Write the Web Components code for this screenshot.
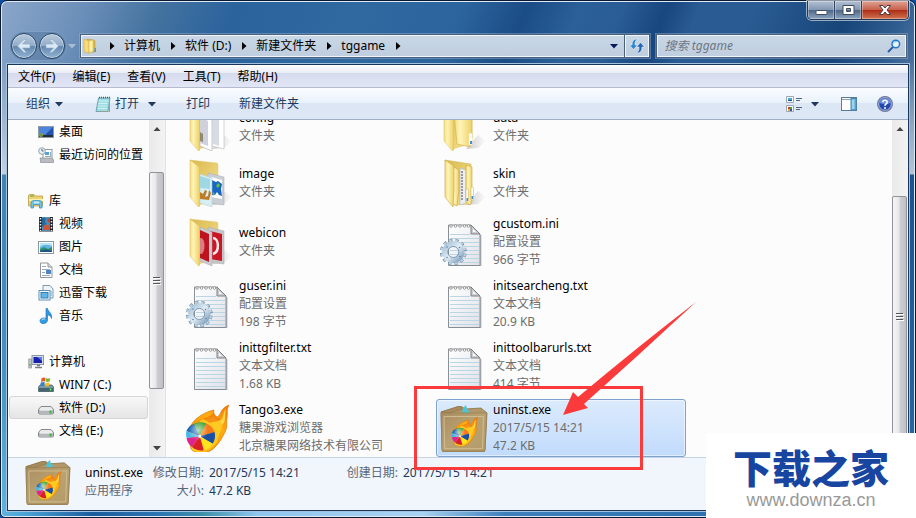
<!DOCTYPE html>
<html lang="zh-CN">
<head>
<meta charset="utf-8">
<title>tggame</title>
<style>
html, body { margin: 0; height: 100%; }
body { position: relative; overflow: hidden; background: #0b4fa8; font: 12px/18px "Noto Sans", "Noto Sans CJK SC", sans-serif; color: #000; }
</style>
</head>
<body>
<explorer-window></explorer-window>
<callout-mark></callout-mark>
<site-mark></site-mark>

<script>
const define = (name, html, setup) => customElements.define(name, class extends HTMLElement {
  connectedCallback() {
    if (this.shadowRoot) return;
    const t = document.createElement('template');
    t.innerHTML = typeof html === 'function' ? html(this) : html;
    this.attachShadow({ mode: 'open' }).append(t.content.cloneNode(true));
    if (setup) setup(this);
  }
});

const RESET = `button{font:inherit;color:inherit;background:none;border:0;margin:0;padding:0;display:flex;align-items:center;white-space:nowrap}`;

/* ---------- icon drawings ---------- */
const folderDefs = `<defs><linearGradient id="f" x1="0" x2="1"><stop offset="0" stop-color="#f4dc7c"/><stop offset=".35" stop-color="#fff5b8"/><stop offset="1" stop-color="#edcf66"/></linearGradient>
<linearGradient id="b" x1="0" x2="1" y2="1"><stop offset="0" stop-color="#d9b84e"/><stop offset="1" stop-color="#f7e390"/></linearGradient>
<linearGradient id="s" x1="0" x2="1"><stop offset="0" stop-color="#888" stop-opacity=".45"/><stop offset="1" stop-color="#999" stop-opacity="0"/></linearGradient></defs>`;
const shadow = `<path d="M26 46L38 32 46 38 38 45z" fill="url(#s)"/>`;
const folderBack = `<path d="M4 1L31 4Q32 4 32 6V40L13 46z" fill="url(#b)" stroke="#e0c468" stroke-width=".4"/>`;
const folderFront = `<path d="M4 1L12 7Q13.500 8 13.500 10V47.500Q13 49 12 47.500L4 38z" fill="url(#f)" stroke="#dcbf62" stroke-width=".5"/>`;
const folder = inner => folderDefs + shadow + folderBack + inner + folderFront;
const paper = `<defs><linearGradient id="p" x1="0" y1="0" x2="1" y2="1"><stop offset="0" stop-color="#fff"/><stop offset="1" stop-color="#dfe1e8"/></linearGradient></defs>
<path d="M8.500 7H31L40 16V47.500H8.500z" fill="url(#p)" stroke="#8b8f96"/><path d="M9 48.300H40.800V17" fill="none" stroke="#777d86" stroke-width=".7"/>
<path d="M31 7V16H40z" fill="#c9ccd2" stroke="#777" stroke-width=".9"/><path d="M33 11v3h3z" fill="#fff"/>
<path d="M10 16.500H30M10 20.500H39M10 24.500H39M10 28.500H39M10 32.500H39M10 36.500H39M10 40.500H39M10 44.500H39" stroke="#bcd5e4"/>
<g fill="#fff" stroke="#888" stroke-width=".8"><circle cx="11" cy="8" r="1.300"/><circle cx="15.500" cy="8" r="1.300"/><circle cx="20" cy="8" r="1.300"/><circle cx="24.500" cy="8" r="1.300"/><circle cx="28.500" cy="8" r="1.300"/></g>`;
const gear = `<defs><linearGradient id="g" x1="0" y1="0" x2="1" y2="1"><stop offset="0" stop-color="#a9c3d8"/><stop offset=".5" stop-color="#e0ecf4"/><stop offset="1" stop-color="#7fa0bc"/></linearGradient></defs>
<g transform="rotate(8 13.300 34)"><circle cx="13.300" cy="34" r="11.500" fill="none" stroke="#7390aa" stroke-width="3.800" stroke-dasharray="3.200 2.820"/><circle cx="13.300" cy="34" r="11.600" fill="none" stroke="#bdd2e2" stroke-width="2.600" stroke-dasharray="2.400 3.620" stroke-dashoffset="-.4"/></g>
<circle cx="13.300" cy="34" r="8.300" fill="none" stroke="url(#g)" stroke-width="5.600"/><circle cx="13.300" cy="34" r="5.500" fill="none" stroke="#6f90ab" stroke-width=".9"/>
<g fill="#5d86a8"><circle cx="7" cy="29" r=".8"/><circle cx="19.500" cy="29.500" r=".8"/><circle cx="20" cy="38.500" r=".8"/><circle cx="7" cy="39.500" r=".8"/></g>`;
const flameBall = `<defs><linearGradient id="fl" x1="1" y1="0" x2="0" y2="1"><stop offset="0" stop-color="#f0720c"/><stop offset=".35" stop-color="#ffae10"/><stop offset=".6" stop-color="#f79b0a"/><stop offset="1" stop-color="#ffe92e"/></linearGradient>
<radialGradient id="gl" cx=".45" cy=".25" r=".7"><stop offset="0" stop-color="#fff" stop-opacity=".65"/><stop offset=".5" stop-color="#fff" stop-opacity="0"/></radialGradient></defs>
<path d="M2 28C5 17 15 9 28 6C27 9 28 11 31 13C36 11 33 5 43 1C40 6 42 9 41 14C40 20 42 22 39 28C36 34 34 38 29 43C24 50 10 51 5 45z" fill="url(#fl)" stroke="#db7908" stroke-width=".7"/>
<path d="M14 17C21 14 24 16 28 12C29 17 36 15 36 21C36 27 33 28 32 36C29 44 20 48 12 46z" fill="#ffd427" opacity=".75"/><path d="M34 17C39 13 36 9 40 5C38 12 41 16 36 21z" fill="#ffd84a"/><path d="M17 15C23 12 26 12 28 7C28 14 33 15 34 13C35 19 27 17 24 19z" fill="#ee6b10" opacity=".6"/>
<g transform="rotate(-12 15 33)"><path d="M14 32L2 24A14.500 14.500 0 0 1 11 18.600z" fill="#1767b5"/><path d="M14 32L11 18.600A14.500 14.500 0 0 1 23 21z" fill="#3aa135"/><path d="M14 32L23 21A14.500 14.500 0 0 1 29.300 31z" fill="#f6791a"/><path d="M14 32L29.300 31A14.500 14.500 0 0 1 25 42z" fill="#1b4fa3"/><path d="M14 32L25 42A14.500 14.500 0 0 1 15 46.500z" fill="#ffe321"/><path d="M14 32L15 46.500A14.500 14.500 0 0 1 4 41z" fill="#da2027"/><path d="M14 32L4 41A14.500 14.500 0 0 1 .7 31z" fill="#df2490"/><path d="M14 32L.7 31A14.500 14.500 0 0 1 2 24z" fill="#45b6e6"/>
<circle cx="15" cy="33" r="14.300" fill="url(#gl)"/><circle cx="14" cy="32" r="1.500" fill="#fff"/></g>`;

const ICONS = {
  'folder-config': ['0 0 48 48', folder(`<path d="M26 11L38 15V46L26 43z" fill="#fff" stroke="#bbb" stroke-width=".6"/><path d="M27 14L33 16V43L27 41z" fill="#d7dbe6"/><path d="M14 12L26 17V48L14 43z" fill="#fff" stroke="#aaa" stroke-width=".6"/><path d="M14 14L22 18V43L14 40z" fill="#cfd2dc"/><path d="M14 29l3 2v8l-3-1z" fill="#8f8b72"/>`)],
  'folder-image': ['0 0 48 48', folder(`<path d="M22 14L38 18V46L22 44z" fill="#c9ced4" stroke="#aaa" stroke-width=".5"/><path d="M25 18L36 21V40L25 38z" fill="#fff"/><path d="M26 21l4 2 2-1 4 3-1 5 1 7-3-1-2-3-2 3-3 0z" fill="#1768c2"/><path d="M32 24l2 2-2 3-2-2zM27 33l2 2-2 2z" fill="#64c238"/><path d="M14 15L26 19V48L14 44z" fill="#d6eff3" stroke="#b5c7cc" stroke-width=".5"/><path d="M14 17L24 20V30L14 29z" fill="#9fd8e5"/><path d="M14 33l3 2 2-4 2 1-2 6 3-1 1-6 2 3-2 7-9-1z" fill="#bd7c26"/>`)],
  'folder-web': ['0 0 48 48', folder(`<path d="M22 9L38 13V46L22 44z" fill="#c5c7ca" stroke="#aaa" stroke-width=".5"/><path d="M24 13L36 16V43L24 41z" fill="#cb1625"/><path d="M27 20C33 20 34 34 27 36" fill="none" stroke="#ffe9e9" stroke-width="2.500"/><path d="M14 9L26 14V48L14 43z" fill="#c9cbce" stroke="#aaa" stroke-width=".5"/><path d="M14 12L23 16V44L14 40z" fill="#bd1420"/><ellipse cx="15" cy="28" rx="3.500" ry="8" fill="#fff" opacity=".45"/>`)],
  'folder-data': ['0 0 48 48', folder(`<path d="M14 9L29 11Q32 11 32 15V35L30 44 17 41z" fill="url(#f)" stroke="#d3b04b" stroke-width=".6"/><rect x="29" y="30" width="3" height="12" rx="1.500" fill="#fff"/><rect x="30" y="38" width="2" height="3" fill="#3d8fd8"/>`)],
  'folder-skin': ['0 0 48 48', folderDefs + shadow + `<path d="M5 1L31 5V45L14 46z" fill="url(#b)" stroke="#d5b350" stroke-width=".5"/><path d="M20 9L26 11V44L20 46z" fill="#eceef3" stroke="#aaa" stroke-width=".5"/><path d="M22 12v30" stroke="#999" stroke-width="2" stroke-dasharray="2 1"/><path d="M26 6L32 8V42L30 46 26 43z" fill="url(#f)" stroke="#c9a642" stroke-width=".6"/><path d="M12 7L19 11V30L17 47 12 44z" fill="url(#f)" stroke="#c9a642" stroke-width=".6"/><path d="M5 1L14 7V31L13 48 5 38z" fill="url(#f)" stroke="#c9a642" stroke-width=".6"/><rect x="26" y="30" width="2.500" height="13" rx="1.200" fill="#fff" stroke="#caa843" stroke-width=".5"/><rect x="31" y="28" width="2.500" height="13" rx="1.200" fill="#fff" stroke="#caa843" stroke-width=".5"/><path d="M27.300 39v3M32.300 37v3" stroke="#3d8fd8" stroke-width="1.500"/>`],
  'txt': ['0 0 48 48', paper],
  'ini': ['0 0 48 48', paper + gear],
  'tango': ['0 0 48 48', flameBall],
  'package': ['0 0 48 48', `<defs><linearGradient id="bx" x1="0" y1="0" x2="1" y2="1"><stop offset="0" stop-color="#a98d60"/><stop offset=".5" stop-color="#b9a272"/><stop offset="1" stop-color="#b39a68"/></linearGradient></defs>
  <path d="M1 8L17 3Q22 1 25 5L41 4 47 9 45 46Q45 48 43 48H4Q2 48 2 46z" fill="#b29868" stroke="#8e744a" stroke-width=".8"/><path d="M1 8L18 2.500Q21 2 23 5L9 9z" fill="#a78b5c" stroke="#8e744a" stroke-width=".6"/><path d="M23 4l3-3 1 4 3 3-4 1-4-1z" fill="#4cc5d6"/>
  <path d="M1 9H46.500L45 46Q45 47 43 47H4Q2 47 2 45z" fill="url(#bx)" stroke="#927a50" stroke-width=".6"/><path d="M4 12.500H43.500L42.500 44.700H4.700z" fill="none" stroke="#d3c093" stroke-width=".9"/><g transform="translate(11.500 12.500) scale(.61)">${flameBall}</g>`],
  'folder-mini': ['0 0 16 16', `<path d="M4 1L11 2Q12 2 12 4V14H4z" fill="#dfbb50" stroke="#b7933b" stroke-width=".5"/><path d="M1 1L6 3V15.500L1 13.500z" fill="#f6dc78" stroke="#c7a44a" stroke-width=".5"/><path d="M6 3L10 2V13L8 14.500 6 14z" fill="#fff0a2" stroke="#c7a44a" stroke-width=".4"/><path d="M11.500 10h1.500v4h-1.500z" fill="#4a9adb"/>`],
  'desktop': ['0 0 16 16', `<rect x=".5" y="2.500" width="15" height="11" fill="#2252ad" stroke="#8f99a8"/><path d="M1 3H15L6 12 1 12z" fill="#4b85dc"/><path d="M1 11H15V13H1z" fill="#22303e"/><circle cx="3" cy="11" r="2" fill="#e59a24"/><path d="M3 9v4M1 11h4" stroke="#2f9f54"/>`],
  'recent': ['0 0 16 16', `<rect x="5" y="2.500" width="9" height="10" fill="#fff" stroke="#8b99a6"/><rect x="7" y="5" width="4" height="3" fill="#4fa5d8"/><path d="M7 9.500h5M12.500 5v5" stroke="#96a9b8"/><circle cx="4" cy="4" r="3.300" fill="#e8eef2" stroke="#9aa6ad"/><path d="M4 2v2h1.500" fill="none" stroke="#4a6b85"/><path d="M2 11h12l1.500 2v2.500H2.500V13z" fill="#b9bdc2" stroke="#8b8f94" stroke-width=".7"/>`],
  'library': ['0 0 16 16', `<path d="M.5 4V2.500L1.500 1.500H6L7 3H14.500V13H.500z" fill="#eed372" stroke="#bd9c42" stroke-width=".8"/><path d="M2 3h4" stroke="#56a944"/><path d="M1 6H15V8H1z" fill="#fff2ae"/><path d="M3 15V10Q3 7.500 6 7.500H11Q14 7.500 14 10V15H11.500V11.500H5.500V15z" fill="#6dc6e8" stroke="#3f92bf" stroke-width=".8"/><path d="M6 8.500h5v2h-5z" fill="#c4edf8"/>`],
  'video': ['0 0 16 16', `<rect x="1" y="1" width="14" height="14.500" fill="#20262c"/><rect x="4" y="1" width="8" height="14" fill="#4d8fb8"/><path d="M4 2h4l-1 4 2 2-5 3z" fill="#23689c"/><path d="M5 10l3-2 1 2 3-2v6H5z" fill="#c9563b"/><path d="M9 3l3-1v4l-2 1z" fill="#b54a3d"/><path d="M2.500 2v13M13.500 2v13" stroke="#eee" stroke-width="1.500" stroke-dasharray="1.500 1.500"/>`],
  'picture': ['0 0 16 16', `<rect x=".5" y="2.500" width="15" height="12" fill="#fff" stroke="#8e989f"/><rect x="2" y="4" width="12" height="9" fill="#63b4e2"/><path d="M2 8Q6 4 14 7V4H2z" fill="#b8e6f6"/><path d="M2 10L6 8 10 10 14 8V13H2z" fill="#2f8c6c"/><path d="M2 12Q8 9 14 12V13H2z" fill="#1b5584"/>`],
  'document': ['0 0 16 16', `<path d="M2.500 1H10L14 5V15.500H2.500z" fill="#fff" stroke="#8f979e"/><path d="M10 1V5H14" fill="#d9dee3" stroke="#8f979e"/><path d="M4 4.500h4M4 7.500h8M4 10.500h3M4 13.500h8" stroke="#9aa7c0"/><rect x="8" y="8" width="5" height="4" fill="#4d85c4"/>`],
  'thunder': ['0 0 16 16', `<path d="M5 .500H12L15 4V13H5z" fill="#eef6fb" stroke="#8097ab"/><rect x="1" y="5.500" width="11" height="9.500" fill="#fff" stroke="#5e8fb4"/><rect x="3" y="7.500" width="7" height="5.500" fill="#60b5e7" stroke="#2e7fb8"/><path d="M13 6v5" stroke="#6ab0dc"/>`],
  'music': ['0 0 16 16', `<path d="M8 .500H9.500C10 4 14.500 4.500 13.500 10.500 13 8 11 7 9.500 7V12.500C9 16.500 2 16.800 2 12.800 2 10 6 9.300 8 10.500z" fill="#2f9be4" stroke="#1769ae" stroke-width=".6"/><path d="M3.500 12Q4.500 10.500 7 11" stroke="#b9e6fd" fill="none"/>`],
  'computer': ['0 0 16 16', `<rect x="4" y="1.500" width="11.500" height="9" fill="#d7dce2" stroke="#8c96a2"/><rect x="5.500" y="3" width="8.500" height="6" fill="#1621b0"/><path d="M9 3h5v4z" fill="#5b79ea"/><path d="M7 13.500h7M9 11.500h3" stroke="#777f88" stroke-width="1.500"/><rect x=".8" y="5" width="2.700" height="9" fill="#bfc6cc" stroke="#868d94" stroke-width=".7"/><path d="M2 10v2" stroke="#46a83c"/>`],
  'windrive': ['0 0 16 16', `<path d="M2 8h12l1.500 2v4.500H.500V10z" fill="#789aa8" stroke="#51626b" stroke-width=".8"/><path d="M1 11h14v3.500H1z" fill="#47626f"/><path d="M12.500 11.500v2" stroke="#5aff53" stroke-width="1.500"/><path d="M3.500 1.500Q5.500 0 7.500 1L7 4.500Q5 3.800 3 5z" fill="#e8562a"/><path d="M8.200 1.200Q10 2 12.200 1L11.600 4.500Q9.500 5.400 7.600 4.600z" fill="#77b82f"/><path d="M2.800 5.600Q5 4.500 6.800 5.200L6.200 8.800Q4 8 2 9z" fill="#3481c9"/><path d="M7.500 5.500Q9.500 6.200 11.500 5.300L11 9Q9 9.700 7 9z" fill="#f4bb22"/>`],
  'drive': ['0 0 16 16', `<path d="M3 6.500H13L15.500 9.500V13Q15.500 14 14 14H2Q.500 14 .500 13V9.500z" fill="#e9eaec" stroke="#85888d"/><path d="M1 9.700H15V13H1z" fill="#b4b7bb"/><path d="M2 10h12" stroke="#fff"/><path d="M12.500 10.500v3" stroke="#39b53a" stroke-width="2"/>`],
  'notepad': ['0 0 16 16', `<path d="M3.500 2H15L13 15.500H1z" fill="#9edbe2" stroke="#5c98a6" stroke-width=".8"/><path d="M14.500 3v13H4" fill="none" stroke="#b79d69"/><path d="M4 5h9M3.500 7.500h9M3 10h9M3 12.500h9" stroke="#cdf3f6"/><path d="M4 1.500h11" stroke="#555" stroke-width="1.500" stroke-dasharray="1 1"/>`],
  'views': ['0 0 16 16', `<path d="M.5.500h7v6h-7zM.5 9.500h7v6h-7z" fill="#fff" stroke="#9aa8b5"/><path d="M2 2h4v3H2z" fill="#46a9cf"/><path d="M2 4h4v1H2z" fill="#14558b"/><path d="M2 11h2v2H2z" fill="#e22f23"/><path d="M4 11h2v2H4z" fill="#3eaa35"/><path d="M2 13h2v2H2z" fill="#f1ad1b"/><path d="M4 13h2v2H4z" fill="#2755c6"/><path d="M10 2.500h6M10 4.500h4M10 11.500h6M10 13.500h4" stroke="#52677f"/>`],
  'pane': ['0 0 16 16', `<rect x=".5" y="1.500" width="15" height="13" fill="#fff" stroke="#5b7998"/><path d="M1 3.500h14" stroke="#8ba4bc"/><rect x="10" y="2.500" width="5" height="11.500" fill="#79bfe0" stroke="#3f88b0"/><path d="M12 4v9" stroke="#bde7f6"/>`],
  'help': ['0 0 16 16', `<circle cx="8" cy="8" r="7.400" fill="#2d52b8" stroke="#767e9b" stroke-width="1.200"/><circle cx="8" cy="8" r="6.300" fill="#2348ae" stroke="#cdd7ee" stroke-width=".8"/><path d="M2.500 7A5.600 5.600 0 0 1 13.500 7Q8 9 2.500 7z" fill="#6e90e0"/><path d="M5.800 6.300Q5.800 4.200 8 4.200T10.200 6.200Q10.200 7.300 9 8T8 9.800" fill="none" stroke="#fff" stroke-width="1.500"/><circle cx="8" cy="12" r="1" fill="#fff"/>`],
  'refresh': ['0 0 16 16', `<path d="M7 1C4 1.500 3 4 3 7H.5L4.500 11.500 8.500 7H6C6 5 6 3 8 1.500z" fill="#2e86d0" stroke="#fff" stroke-width=".5"/><path d="M9 15C12 14.500 13 12 13 9H15.500L11.500 4.500 7.500 9H10C10 11 10 13 8 14.500z" fill="#2465b5" stroke="#fff" stroke-width=".5"/>`],
  'search': ['0 0 16 16', `<path d="M7 9L2.500 13.500" stroke="#2a5da8" stroke-width="2" stroke-linecap="round"/><circle cx="9.800" cy="6" r="3.800" fill="#e6f4fb" stroke="#2a78c4" stroke-width="1.500"/><path d="M7 5.500Q8 3 11 3.500" stroke="#6fc9f0" fill="none"/>`],
  'back': ['0 0 16 16', `<path d="M8 1.500L1.500 8 8 14.500H10.500L6.500 10H14V6H6.500L10.500 1.500z" fill="#dbe9f5" stroke="#8ba9c6" stroke-width=".6"/>`],
  'forward': ['0 0 16 16', `<path d="M8 1.500L14.500 8 8 14.500H5.500L9.500 10H2V6H9.500L5.500 1.500z" fill="#dbe9f5" stroke="#8ba9c6" stroke-width=".6"/>`],
  'down': ['0 0 8 8', `<path d="M0 2H8L4 6.500z" fill="currentColor"/>`],
  'right': ['0 0 8 8', `<path d="M2 0L6.500 4 2 8z" fill="currentColor"/>`],
  'up': ['0 0 8 8', `<path d="M.500 6H7.500L4 2z" fill="currentColor"/>`],
};
define('ui-icon', el => {
  const [box, body] = ICONS[el.getAttribute('name')];
  const s = el.getAttribute('size') || 16;
  return `<style>:host{display:block;flex:none;width:${s}px;height:${s}px}svg{display:block;width:100%;height:100%}</style><svg viewBox="${box}" aria-hidden="true">${body}</svg>`;
});

/* ---------- window frame ---------- */
define('caption-buttons', `<style>${RESET}
:host{display:flex;height:18px;margin-right:6px;border:1px solid #273a55;border-top:0;border-radius:0 0 5px 5px;box-shadow:0 0 0 1px #ffffff8c;overflow:hidden}
button{width:27px;justify-content:center;border-right:1px solid #31435d;background:linear-gradient(#b3c1d3,#8498b3 48%,#4d6688 50%,#8fa5c0);box-shadow:inset 0 0 0 1px #ffffff55}
button:last-child{width:46px;border:0;background:linear-gradient(#dfa396,#c8614c 48%,#ac2b14 50%,#d07452)}
svg{display:block}</style>
<button aria-label="最小化"><svg width="13" height="12"><rect x="1" y="6.500" width="11" height="4" rx="1" fill="#fff" stroke="#414c5c"/></svg></button>
<button aria-label="最大化"><svg width="13" height="12"><path fill-rule="evenodd" d="M1 1.500H12V10.500H1zM4.500 4.500V7.500H8.500V4.500z" fill="#fff" stroke="#414c5c"/></svg></button>
<button aria-label="关闭"><svg width="14" height="12"><path d="M1.500 1.500H5L7 4 9 1.500H12.500L9 6 12.500 10.500H9L7 8 5 10.500H1.500L5 6z" fill="#fff" stroke="#4c3a41"/></svg></button>`);

define('address-bar', `<style>${RESET}
:host{display:flex;align-items:center;gap:6px;padding:0 1px 0 2px}
.pill{display:flex;gap:2px;padding:1px;border-radius:14px;background:#53759c80;box-shadow:0 0 0 1px #8ca9c766}
.pill button{width:26px;height:26px;box-sizing:border-box;justify-content:center;border-radius:50%;border:1px solid #2b4767;background:linear-gradient(#b9cadc,#93adc9 48%,#6488b0 52%,#92b3d2);box-shadow:inset 0 0 0 1px #dbe7f3aa}
.recent{color:#a9bdd5;margin:0 -2px 0 -4px}
.box{display:flex;align-items:center;height:22px;border:1px solid #4a6280;background:linear-gradient(#c9d7e5,#bfcedf);box-shadow:inset 0 0 0 1px #eff5fa,0 0 0 1px #a8bed566;box-sizing:content-box}
.path{flex:569;min-width:0}
.path ui-icon.f{margin-left:2px}
.sep{width:25px;display:flex;justify-content:center}
.sp{flex:1}
.go{width:25px;height:22px;justify-content:center;border-left:1px solid #4a6280;box-shadow:inset 1px 0 #eff5fa}
.drop{color:#07195c;width:20px;justify-content:center}
.find{flex:246;min-width:0;padding-right:4px}
input{flex:1;min-width:0;border:0;background:none;outline:0;font:italic 12px/18px "Noto Sans","Noto Sans CJK SC",sans-serif;padding:0 8px}
input::placeholder{color:#6c7682;opacity:1}
</style>
<div class="pill"><button aria-label="后退"><ui-icon name="back"></ui-icon></button><button aria-label="前进"><ui-icon name="forward"></ui-icon></button></div>
<button class="recent" aria-label="最近的页面"><ui-icon name="down" size="8"></ui-icon></button>
<div class="box path"><ui-icon class="f" name="folder-mini"></ui-icon>
<span class="sep"><ui-icon name="right" size="8"></ui-icon></span><button>计算机</button>
<span class="sep"><ui-icon name="right" size="8"></ui-icon></span><button>软件 (D:)</button>
<span class="sep"><ui-icon name="right" size="8"></ui-icon></span><button>新建文件夹</button>
<span class="sep"><ui-icon name="right" size="8"></ui-icon></span><button>tggame</button>
<span class="sep"><ui-icon name="right" size="8"></ui-icon></span><span class="sp"></span>
<button class="drop" aria-label="以前的位置"><ui-icon name="down" size="8"></ui-icon></button><button class="go" aria-label="刷新"><ui-icon name="refresh"></ui-icon></button></div>
<div class="box find"><input type="text" aria-label="搜索" placeholder="搜索 tggame"><ui-icon name="search"></ui-icon></div>`);

define('menu-bar', `<style>${RESET}
:host{display:flex;gap:1px;height:20px;padding:2px 2px 0;border-bottom:1px solid #b5bcd0;background:linear-gradient(#fff,#e9ecf6 36%,#d5daed 38%,#e2e6f6)}
button{padding:0 8px}</style>
<button>文件(F)</button><button>编辑(E)</button><button>查看(V)</button><button>工具(T)</button><button>帮助(H)</button>`);

define('tool-bar', `<style>${RESET}
:host{display:flex;align-items:center;height:31px;padding:0 15px 0 18px;color:#1e395b;background:linear-gradient(#fbfdff,#e8f1fb 48%,#dce6f4 50%,#dde8f6);border-bottom:1px solid #a0afc3}
button{gap:5px}.open{margin:0 30px 0 32px;gap:4px}.open ui-icon:last-child{margin-left:5px}
.new{margin:0 auto 0 29px}.view{gap:9px}.pane{margin:0 20px 0 22px}</style>
<button>组织<ui-icon name="down" size="8"></ui-icon></button>
<button class="open"><ui-icon name="notepad"></ui-icon>打开<ui-icon name="down" size="8"></ui-icon></button>
<button>打印</button><button class="new">新建文件夹</button>
<button class="view" aria-label="更改视图"><ui-icon name="views"></ui-icon><ui-icon name="down" size="8"></ui-icon></button>
<button class="pane" aria-label="预览窗格"><ui-icon name="pane"></ui-icon></button>
<button aria-label="帮助"><ui-icon name="help"></ui-icon></button>`);

define('scroll-bar', el => {
  const [a, b, c] = el.getAttribute('parts').split(' ');
  return `<style>${RESET}
:host{display:flex;flex-direction:column;flex:none;width:16px;background:linear-gradient(90deg,#e9e9e9,#f3f3f3)}
button{height:17px;justify-content:center;color:#444}
.a{flex:${a}}.c{flex:${c}}
.thumb{flex:${b};box-sizing:border-box;display:flex;align-items:center;justify-content:center;margin:0 1px 0 0;border:1px solid #8f9398;border-radius:2px;background:linear-gradient(90deg,#f6f6f6,#e8e8ea 45%,#cdced2 55%,#bfc0c5)}
svg{display:block}</style>
<button aria-label="向上滚动"><ui-icon name="up" size="8"></ui-icon></button><div class="a"></div>
<div class="thumb"><svg width="8" height="9"><path d="M0 1.500h7M0 4.500h7M0 7.500h7" stroke="#54575c"/><path d="M1 2.500h7M1 5.500h7M1 8.500h7" stroke="#fff"/></svg></div>
<div class="c"></div><button aria-label="向下滚动"><ui-icon name="down" size="8"></ui-icon></button>`;
});

/* ---------- navigation pane ---------- */
define('nav-item', el => `<style>${RESET}
:host{display:block;padding:0 1px}
button{box-sizing:border-box;width:100%;height:23px;gap:5px;padding-left:28px;border:1px solid transparent}
:host([root]) button{padding-left:18px}
:host([root]){padding-top:23px}
:host([selected]) button{border-color:#d5d5d5;border-radius:3px;background:linear-gradient(#f8f8f8,#e5e5e5)}</style>
<button><ui-icon name="${el.getAttribute('icon')}"></ui-icon><slot></slot></button>`);

define('nav-pane', `<style>:host{display:flex;flex:none;width:158px;box-sizing:border-box;border-right:1px solid #d6e5f5;overflow:hidden}nav{flex:1;min-width:0;background:#fcfcfc}</style>
<nav><nav-item icon="desktop">桌面</nav-item><nav-item icon="recent">最近访问的位置</nav-item>
<nav-item root icon="library">库</nav-item><nav-item icon="video">视频</nav-item><nav-item icon="picture">图片</nav-item><nav-item icon="document">文档</nav-item><nav-item icon="thunder">迅雷下载</nav-item><nav-item icon="music">音乐</nav-item>
<nav-item root icon="computer">计算机</nav-item><nav-item icon="windrive">WIN7 (C:)</nav-item><nav-item selected icon="drive">软件 (D:)</nav-item><nav-item icon="drive">文档 (E:)</nav-item></nav>
<scroll-bar parts="35 217 51"></scroll-bar>`);

/* ---------- file list ---------- */
define('file-item', el => `<style>
:host{display:flex;box-sizing:border-box;align-items:center;gap:5px;min-height:52px;padding:1px 3px;border:1px solid transparent;border-radius:3px;white-space:nowrap}
:host([selected]){border-color:#7da2ce;background:linear-gradient(#dcebfc,#c1dbfc);box-shadow:inset 0 0 0 1px #ffffff80}
.t{color:#6d6d6d}.n{color:#000}
::slotted(*){display:block}</style>
<ui-icon name="${el.getAttribute('icon')}" size="48"></ui-icon>
<div class="t"><div class="n">${el.getAttribute('name')}</div><slot></slot></div>`);

const FILES = [
  ['folder-config', 'config', '文件夹'], ['folder-data', 'data', '文件夹'],
  ['folder-image', 'image', '文件夹'], ['folder-skin', 'skin', '文件夹'],
  ['folder-web', 'webicon', '文件夹'], ['ini', 'gcustom.ini', '配置设置', '966 字节'],
  ['ini', 'guser.ini', '配置设置', '198 字节'], ['txt', 'initsearcheng.txt', '文本文档', '20.9 KB'],
  ['txt', 'inittgfilter.txt', '文本文档', '1.68 KB'], ['txt', 'inittoolbarurls.txt', '文本文档', '414 字节'],
  ['tango', 'Tango3.exe', '糖果游戏浏览器', '北京糖果网络技术有限公司'], ['package', 'uninst.exe', '2017/5/15 14:21', '47.2 KB', true],
];
define('file-grid', `<style>:host{display:flex;flex:1;min-width:0;overflow:hidden;background:#fcfcfc}
.g{flex:1;display:grid;grid-template-columns:repeat(2,250px);gap:4px;align-content:start;margin-top:-19px;padding-left:16px}</style>
<div class="g">${FILES.map(([i, n, a, b, s]) => `<file-item icon="${i}" name="${n}"${s ? ' selected' : ''}><span>${a}</span>${b ? `<span>${b}</span>` : ''}</file-item>`).join('')}</div>
<scroll-bar parts="59 242 2"></scroll-bar>`);

define('details-pane', `<style>
:host{display:flex;align-items:center;gap:14px;box-sizing:border-box;height:53px;padding:0 0 5px 17px;background:#f1f5fc;border-top:1px solid #c6d5e6;color:#5a6779;white-space:nowrap}
dl{display:grid;grid-template-columns:62px 52px 132px 52px auto;column-gap:5px;margin:0}dt,dd{margin:0}
dt{text-align:right}.n{color:#000}.n,.k{text-align:left}dd{color:#1e395b}dd.k{color:#5a6779}</style>
<ui-icon name="package" size="46"></ui-icon>
<dl><dd class="n">uninst.exe</dd><dt>修改日期:</dt><dd>2017/5/15 14:21</dd><dt>创建日期:</dt><dd>2017/5/15 14:21</dd>
<dd class="k">应用程序</dd><dt>大小:</dt><dd>47.2 KB</dd></dl>`);

define('explorer-window', `<style>
:host{display:flex;flex-direction:column;box-sizing:border-box;height:100vh;border:1px solid #0a1a33;border-radius:7px 7px 5px 5px;box-shadow:inset 0 0 0 1px #dfeaf5;
background:
linear-gradient(90deg,#5fb3df,#48a0d2 3%,#1b5c9f 10%,#2b74b3 17%,#3d8fa9 22%,#8fc5ee 28%,#a9d3f2 46%,#3f80bc 55%,#2a6fae 80%) bottom/100% 8px no-repeat,
linear-gradient(#b8cadd00 60px,#c3d2e2 173px,#3f83b9 174px,#4590c5 70%,#5fb3df) left/7px 100% no-repeat,
linear-gradient(#8ba3c300 60px,#b4c3d7 173px,#1d528f 174px,#2a6aa8) right/8px 100% no-repeat,
linear-gradient(112deg,#8ba6c9 0,#6b8fb9 80px,#43729f 150px,#2b639d 220px,#2f699f 330px,#2c659e 430px,#1b4c85 490px,#2b6099 540px,#2a5c95 580px,#18467e 620px,#2a5b93 650px,#2a5c93 700px,#174579 790px,#2f5d90 840px,#7d93b0 920px)}
header{display:flex;justify-content:flex-end;align-items:flex-start;height:30px}
address-bar{height:30px;margin:0 7px 3px}
main{flex:1;min-height:0;display:flex;flex-direction:column;margin:0 6px 6px;border:1px solid #17365c;outline:1px solid #a5c2dc;outline-offset:0;background:#fcfcfc}
.mid{flex:1;min-height:0;display:flex}</style>
<header><caption-buttons></caption-buttons></header>
<address-bar></address-bar>
<main><menu-bar></menu-bar><tool-bar></tool-bar><div class="mid"><nav-pane></nav-pane><file-grid></file-grid></div><details-pane></details-pane></main>`);

/* ---------- overlays ---------- */
define('callout-mark', `<style>:host{position:absolute;left:0;top:0;pointer-events:none}svg{display:block}</style>
<svg width="720" height="480" aria-hidden="true"><rect x="415.500" y="387.500" width="226" height="81" fill="none" stroke="#fb3b3b" stroke-width="3"/><path d="M563 415L573 392 578 397Q640 345 696 302Q640 354 584 404L588 408z" fill="#fb3b3b"/></svg>`);

define('site-mark', `<style>:host{position:absolute;right:0;bottom:0;box-sizing:border-box;width:210px;height:85px;padding-top:14px;background:#fff;display:flex;flex-direction:column;align-items:center}
strong{font:900 39px/38px "Noto Sans CJK SC",sans-serif;color:#1745a0}
a{margin-top:3px;font:18px/24px "Liberation Sans",sans-serif;color:#999;text-decoration:none}</style>
<strong>下载之家</strong><a href="#">www.downza.cn</a>`);
</script>
</body>
</html>
